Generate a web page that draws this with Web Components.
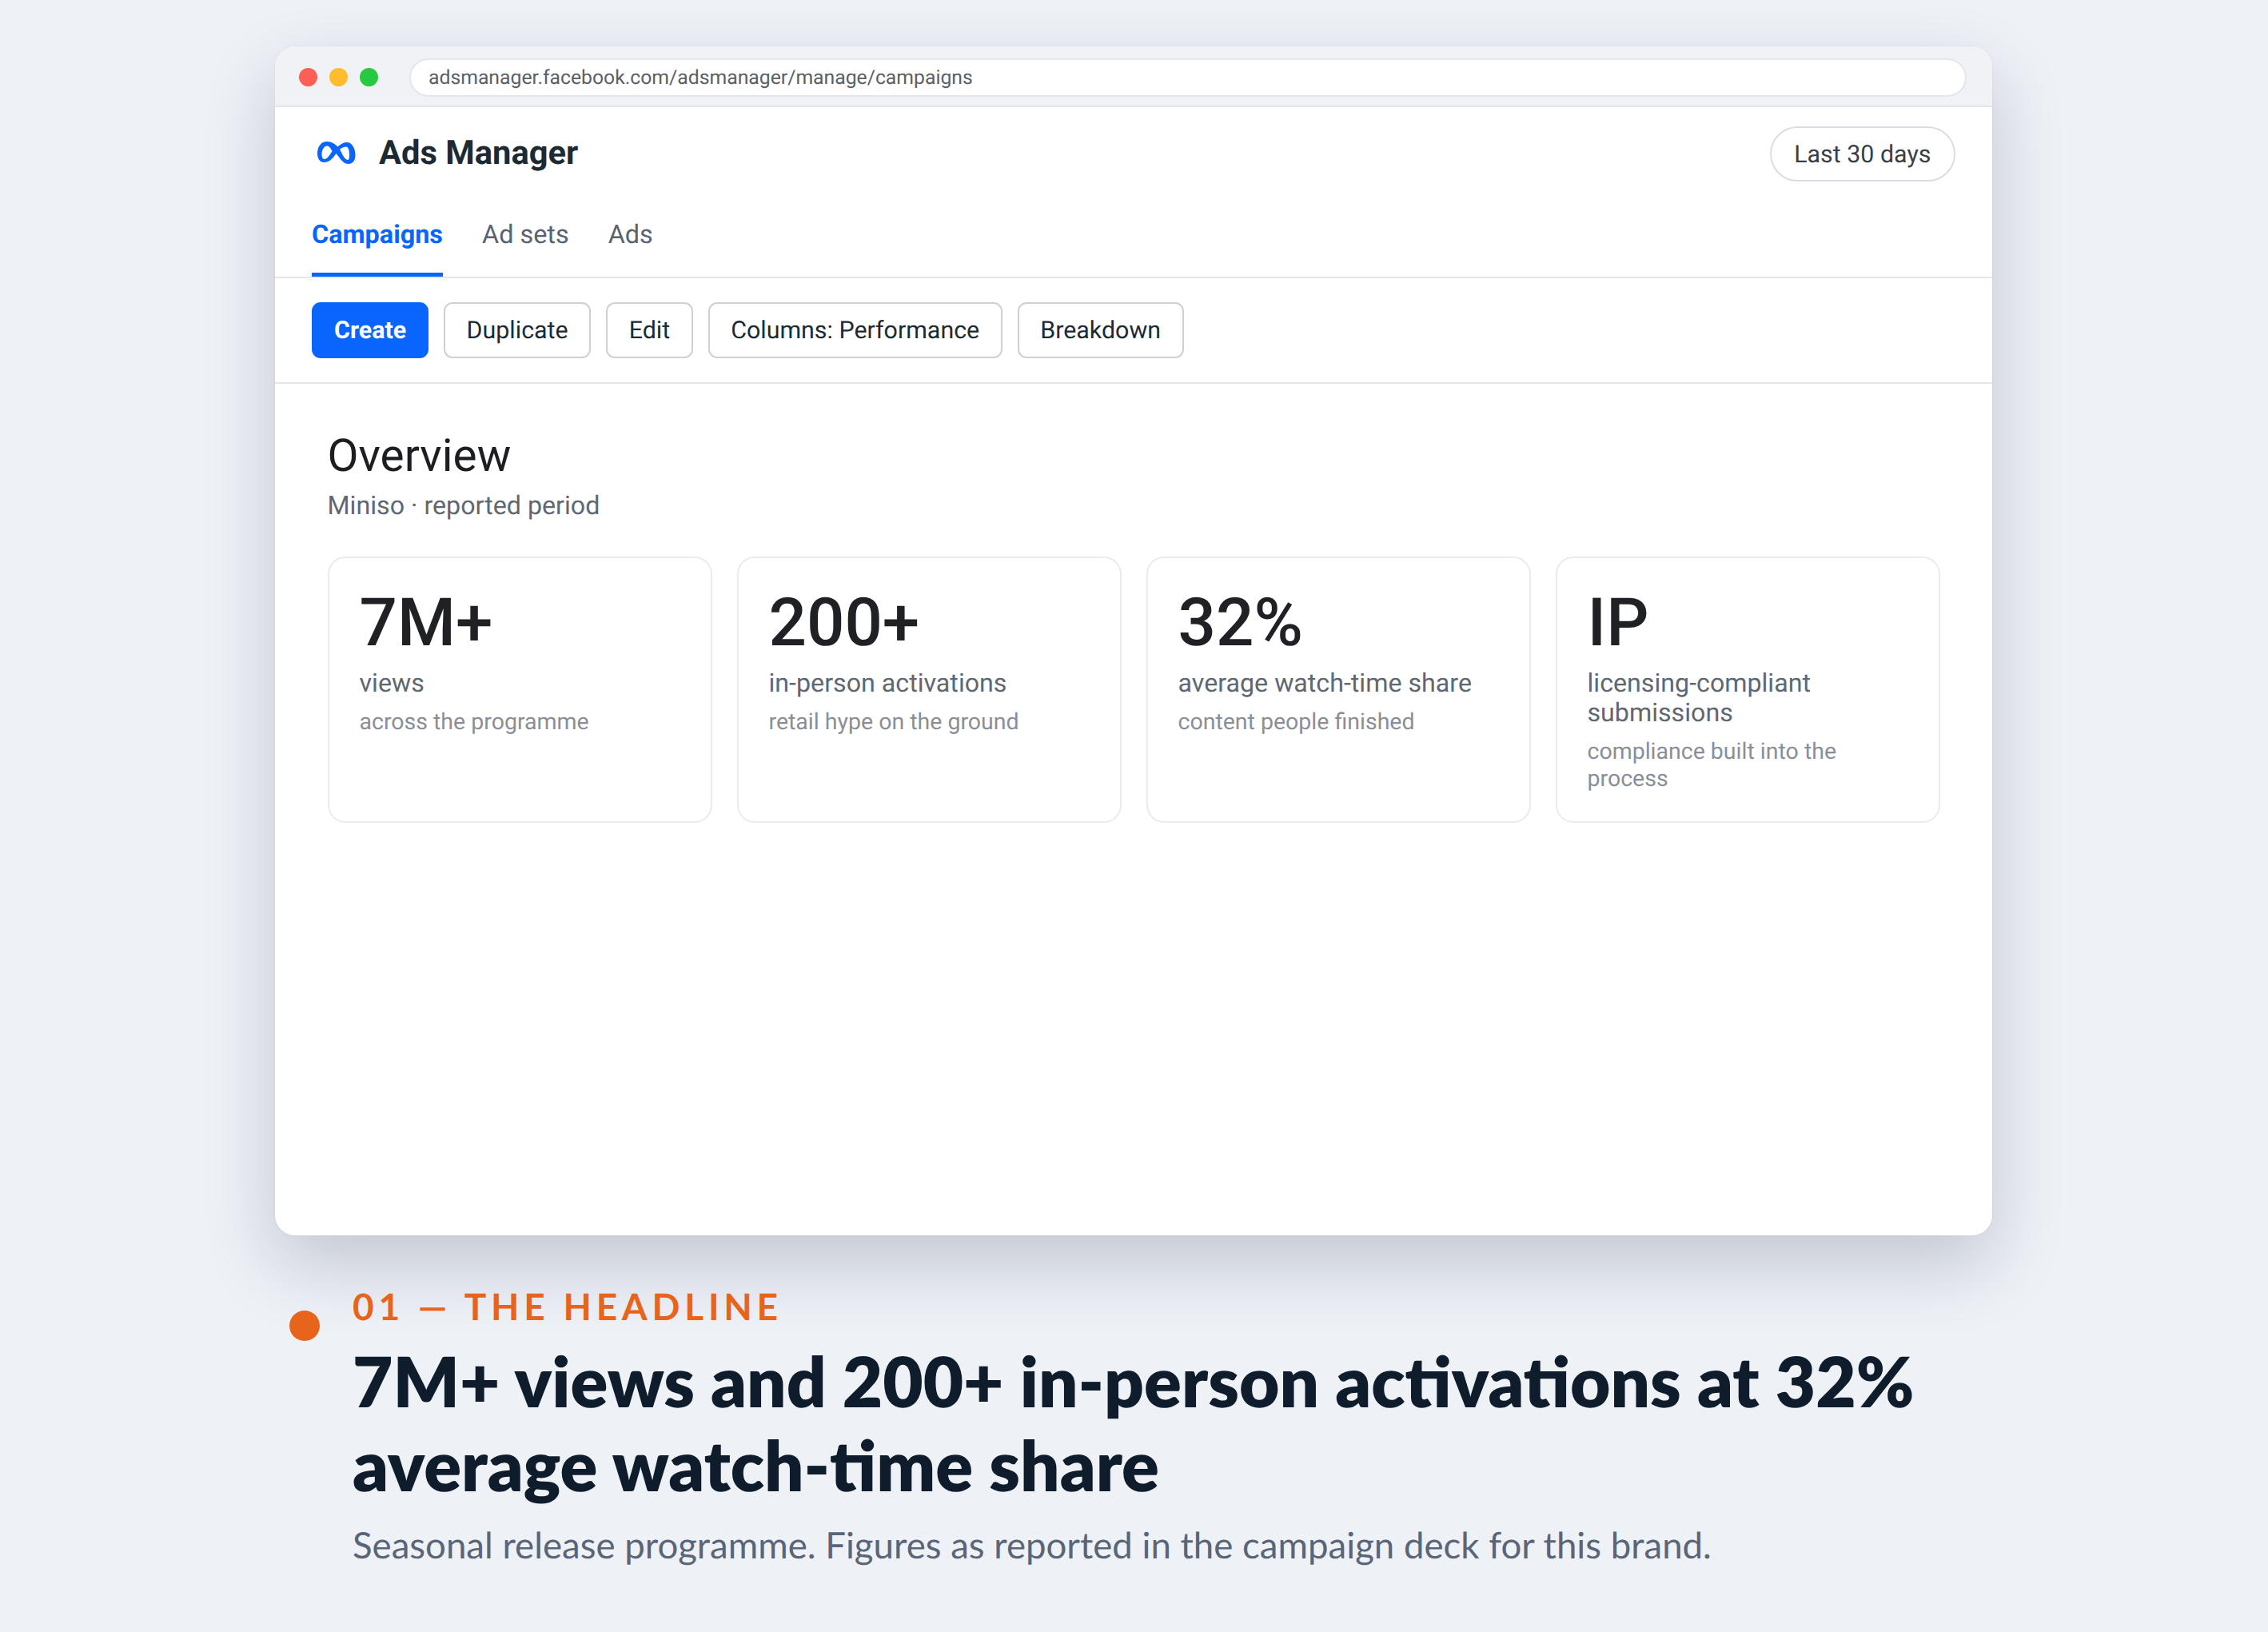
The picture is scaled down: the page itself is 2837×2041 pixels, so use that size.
<!DOCTYPE html>
<html><head><meta charset="utf-8"><title>Ads Manager</title>
<style>html,body{margin:0;padding:0;background:#eef1f6;text-rendering:geometricPrecision}</style></head>
<body><case-slide></case-slide>
<script>
function def(name, css, html){
  customElements.define(name, class extends HTMLElement{
    constructor(){super();const r=this.attachShadow({mode:'open'});r.innerHTML='<style>'+css+'</style>'+html;}
  });
}
def('browser-chrome',`
:host{display:flex;align-items:center;padding:14px 32px 0 30px;height:60px;background:#f0f2f5;border-bottom:2px solid #e4e6eb;font-family:Roboto,sans-serif}
.dots{display:flex;gap:15px;margin-right:39px;margin-top:-11px}
.dots i{width:23px;height:23px;border-radius:50%;display:block}
.url{flex:1;height:44px;margin-top:-11px;border:2px solid #e4e6eb;border-radius:24px;background:#fff;display:flex;align-items:center;padding-left:22px;font-size:24.75px;color:#5a5f67}
`,`<div class="dots"><i style="background:#ff5f57"></i><i style="background:#febc2e"></i><i style="background:#28c840"></i></div><div class="url"><span style="margin-top:1px">adsmanager.facebook.com/adsmanager/manage/campaigns</span></div>`);
def('app-header',`
:host{display:flex;align-items:center;justify-content:space-between;height:117px;padding:0 46px 0 53px;font-family:Roboto,sans-serif;box-sizing:border-box}
.b{display:flex;align-items:center;gap:29px;margin-top:-3px}
svg{display:block;width:48px;height:28px}
.t{font-size:41.7px;font-weight:700;color:#1c2b33}
.p{display:block;border:2px solid #dadde1;border-radius:36px;height:69px;box-sizing:border-box;padding:0 28.500px;line-height:67px;font-size:30.4px;color:#3a3f47}
`,`<div class="b"><svg viewBox="0 0 48 28"><path fill="#0866ff" fill-rule="evenodd" d="M0 15C0 6 5 0 12 0C18 0 22 3 25.500 6.500C29 3 33 1 37 1C43 1 47.500 8 47.500 17C47.500 24 44 28 39 28C34 28 31 25 27 19.500L23.500 15C19 21.500 15 26 8 26C3 26 0 21 0 15ZM5.500 15.500C5.500 19.500 6.500 22 9 22C12 22 15.500 17 18.500 12C16 7.500 14.500 5.500 12 5.500C8.500 5.500 5.500 10.500 5.500 15.500ZM28 9.500C31 7.500 34 6.500 36 6.500C38.500 6.500 40 10.500 40 16C40 20.500 39.500 23 38 23C36 23 34 21 31.500 16.500Z"/></svg><div class="t">Ads Manager</div></div><div class="p">Last 30 days</div>`);
def('tab-bar',`
:host{display:flex;gap:49px;height:95px;padding:0 0 0 46px;border-bottom:2px solid #e4e6eb;font-family:Roboto,sans-serif;font-size:32.4px}
a{display:block;height:95px;box-sizing:border-box;padding-top:21px;line-height:42px;color:#5a6270}
a.on{color:#0866ff;font-weight:700;border-bottom:5px solid #0866ff}
`,`<a class="on">Campaigns</a><a>Ad sets</a><a>Ads</a>`);
def('tool-bar',`
:host{display:flex;gap:19px;padding:30px 0 30px 46px;border-bottom:2px solid #e4e6eb;font-family:Roboto,sans-serif;font-size:30.4px}
b{display:block;font-weight:400;height:70px;box-sizing:border-box;line-height:68px;padding:0 26.500px;border:2px solid #ced0d4;border-radius:11px;color:#1c2b33;background:#fff}
b.p{padding:0 26px;background:#0866ff;border-color:#0866ff;color:#fff;font-weight:700}
`,`<b class="p">Create</b><b>Duplicate</b><b>Edit</b><b>Columns: Performance</b><b>Breakdown</b>`);
def('stat-card',`
:host{display:block;border:2px solid #e9ebef;border-radius:22px;padding:37px 38px 32px;box-sizing:border-box;font-family:Roboto,sans-serif;background:#fff}
.v{font-size:83.5px;font-weight:500;line-height:90px;color:#1f2125}
.l{font-size:32.2px;line-height:37px;color:#606770;margin-top:11px}
.n{font-size:28.5px;line-height:34px;color:#8a8f97;margin-top:13px}
`,`<div class="v"><slot name="v"></slot></div><div class="l"><slot name="l"></slot></div><div class="n"><slot name="n"></slot></div>`);
def('over-view',`
:host{display:block;padding:57px 65.500px 0;font-family:Roboto,sans-serif}
h2{margin:0;font-weight:400;font-size:56.7px;line-height:66px;color:#1c1e21}
p{margin:0;font-size:32.2px;line-height:42px;color:#606770;margin-top:8px}
.g{display:grid;grid-template-columns:repeat(4,1fr);gap:31px;margin-top:43px;height:333px}
`,`<h2>Overview</h2><p>Miniso · reported period</p><div class="g"><slot></slot></div>`);
def('browser-window',`
:host{display:block;width:2148px;height:1487px;margin-left:344px;border-radius:25px;overflow:hidden;background:#fff;box-shadow:0 36px 90px rgba(20,32,60,.2),0 0 2px rgba(20,32,60,.1)}
`,`<slot></slot>`);
def('case-caption',`
:host{display:grid;grid-template-columns:38px 1fr;column-gap:41px;margin:62px 0 0 362px;font-family:Lato,sans-serif}
.d{width:38px;height:38px;border-radius:50%;background:#e8641b;margin-top:32px}
.e{font-size:46px;font-weight:700;letter-spacing:.125em;line-height:54px;color:#e8641b}
h1{margin:13px 0 0;font-size:87px;font-weight:800;line-height:105px;color:#0f1c2b;width:2020px}
p{margin:18px 0 0;font-size:45.6px;line-height:60px;color:#5a6678}
`,`<div class="d"></div><div><div class="e">01 — THE HEADLINE</div><h1>7M+ views and 200+ in-person activations at 32% average watch-time share</h1><p>Seasonal release programme. Figures as reported in the campaign deck for this brand.</p></div>`);
def('case-slide',`
:host{display:block;width:2837px;height:2041px;padding-top:58px;box-sizing:border-box;background:#eef1f6;overflow:hidden}
`,`<browser-window><browser-chrome></browser-chrome><app-header></app-header><tab-bar></tab-bar><tool-bar></tool-bar><over-view>
<stat-card><span slot="v">7M+</span><span slot="l">views</span><span slot="n">across the programme</span></stat-card>
<stat-card><span slot="v">200+</span><span slot="l">in-person activations</span><span slot="n">retail hype on the ground</span></stat-card>
<stat-card><span slot="v">32%</span><span slot="l">average watch-time share</span><span slot="n">content people finished</span></stat-card>
<stat-card><span slot="v">IP</span><span slot="l">licensing-compliant submissions</span><span slot="n">compliance built into the process</span></stat-card>
</over-view></browser-window><case-caption></case-caption>`);
</script></body></html>
